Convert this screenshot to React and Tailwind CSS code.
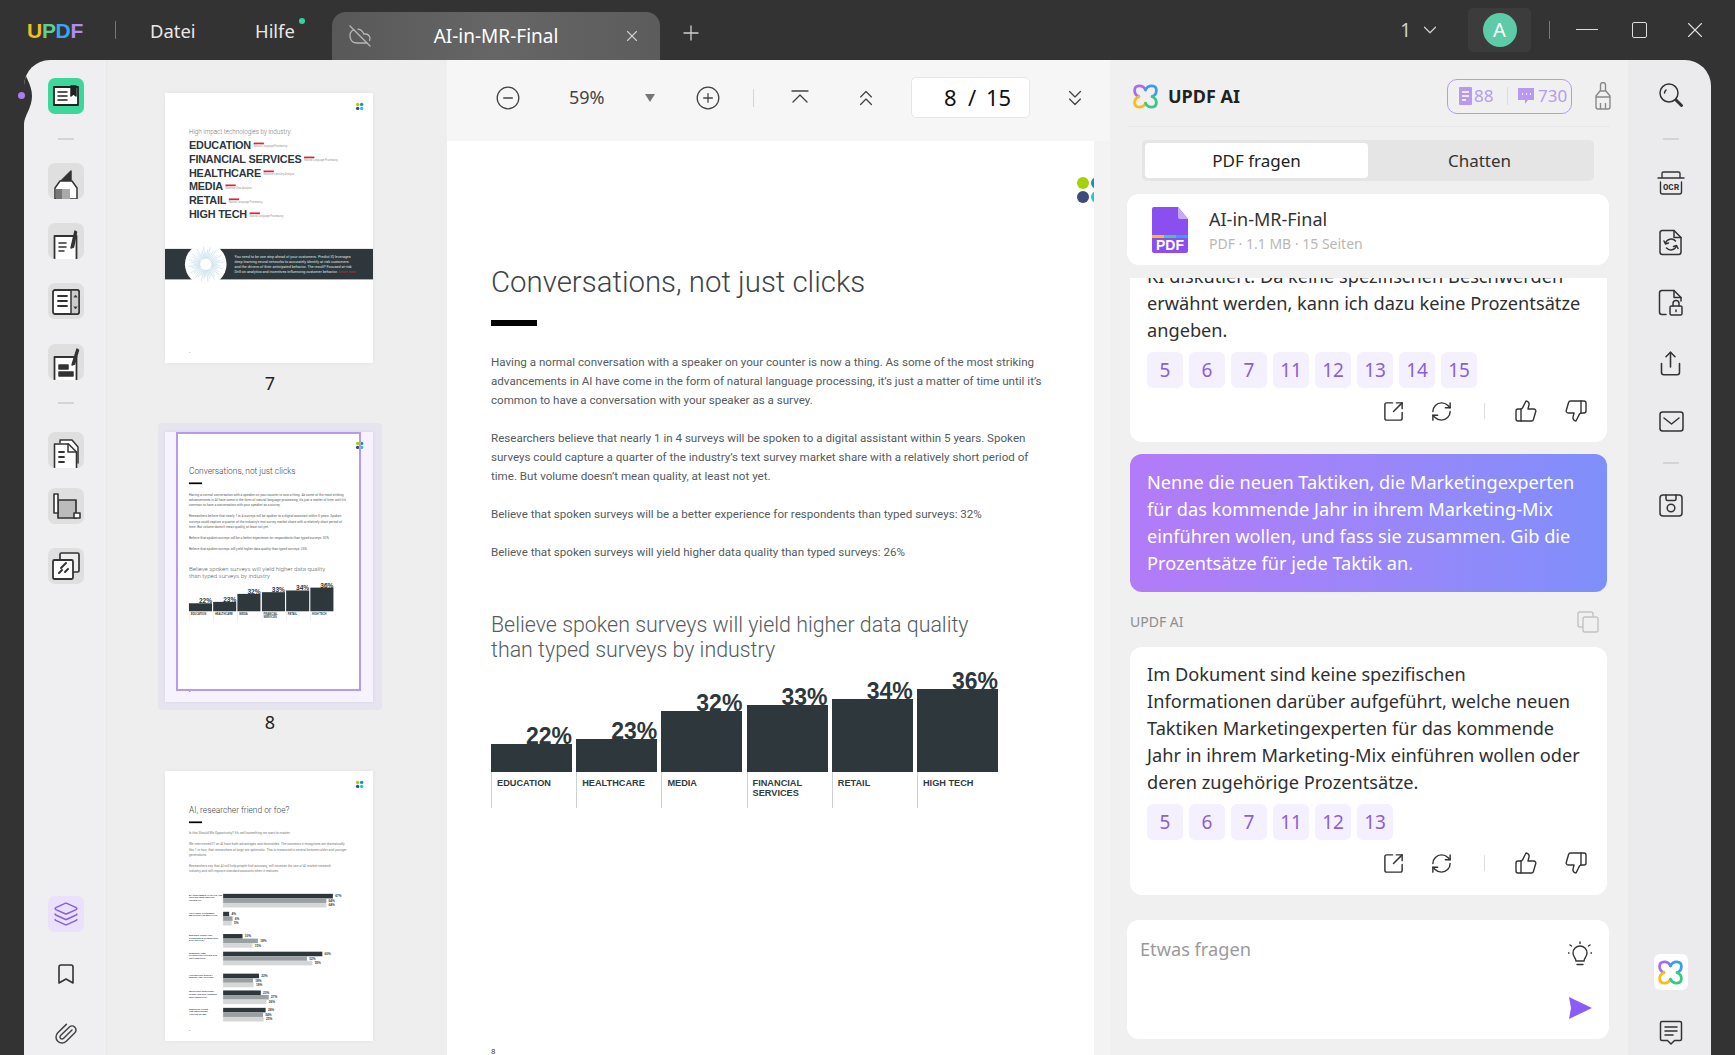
import React from "react";
import { ThumbsUp, ThumbsDown, RefreshCw, SquareArrowOutUpRight, CirclePlus, CircleMinus, ChevronsUp, ChevronsDown, ChevronDown, Layers, Bookmark, Paperclip, Plus, X, CloudOff, Share } from "lucide-react";

const ui = "font-['Noto_Sans','Liberation_Sans',sans-serif]";
const doc = "font-['Roboto','Liberation_Sans',sans-serif]";
const arial = "font-['Liberation_Sans',Arial,sans-serif]";

function Clover({ size = 26 }) {
  return (
    <svg width={size} height={size} viewBox="0 0 24 24" fill="none" strokeWidth="2.3" strokeLinecap="round">
      <path d="M12 6.5C10 2 3 2 3 7c0 3 2 4.5 3.5 5" stroke="#a66df0" />
      <path d="M12 6.5C14 2 21 2 21 7c0 3-2 4.5-3.5 5" stroke="#3b9df0" />
      <path d="M6.500 12C4.500 13 3 14.500 3 17c0 5 7 5 9 .5" stroke="#f5bd1f" />
      <path d="M17.500 12C19.500 13 21 14.500 21 17c0 5-7 5-9 .5" stroke="#35c98a" />
    </svg>
  );
}

function LogoDots() {
  return (
    <div className="grid w-[26px] grid-cols-2 gap-[2px]">
      <span className="h-3 w-3 rounded-full bg-[#a3d10a]" />
      <span className="h-3 w-3 rounded-full bg-[#1e88d2]" />
      <span className="h-3 w-3 rounded-full bg-[#3d4a7a]" />
      <span className="h-3 w-3 rounded-full bg-[#25c5d8]" />
    </div>
  );
}

function PageShell({ children, num }) {
  return (
    <div className={`${doc} flex h-[945px] w-[730px] flex-col bg-white pl-[84px] pr-[34px] pt-[34px]`}>
      <div className="flex justify-end"><LogoDots /></div>
      {children}
      <div className="mt-auto pb-[30px] text-[8px] text-[#444]">{num}</div>
    </div>
  );
}

const Lines = ({ lines, cls }) => (
  <p className={cls}>
    {lines.map((l) => <span key={l} className="block whitespace-nowrap">{l}</span>)}
  </p>
);

const bars8 = [
  ["22%", "h-[28px]", ["EDUCATION"]],
  ["23%", "h-[33px]", ["HEALTHCARE"]],
  ["32%", "h-[61px]", ["MEDIA"]],
  ["33%", "h-[67px]", ["FINANCIAL", "SERVICES"]],
  ["34%", "h-[73px]", ["RETAIL"]],
  ["36%", "h-[83px]", ["HIGH TECH"]],
];

function Page8() {
  const p = "text-[11.6px] leading-[19px] text-[#555b5e]";
  return (
    <PageShell num="8">
      <h1 className="mt-[61px] whitespace-nowrap text-[29.4px] font-light leading-[36px] text-[#3d4346]">Conversations, not just clicks</h1>
      <div className="mt-[20px] h-[6px] w-[46px] bg-black" />
      <Lines cls={`mt-[27px] ${p}`} lines={["Having a normal conversation with a speaker on your counter is now a thing. As some of the most striking", "advancements in AI have come in the form of natural language processing, it’s just a matter of time until it’s", "common to have a conversation with your speaker as a survey."]} />
      <Lines cls={`mt-[19px] ${p}`} lines={["Researchers believe that nearly 1 in 4 surveys will be spoken to a digital assistant within 5 years. Spoken", "surveys could capture a quarter of the industry’s text survey market share with a relatively short period of", "time. But volume doesn’t mean quality, at least not yet."]} />
      <Lines cls={`mt-[19px] ${p}`} lines={["Believe that spoken surveys will be a better experience for respondents than typed surveys: 32%"]} />
      <Lines cls={`mt-[19px] ${p}`} lines={["Believe that spoken surveys will yield higher data quality than typed surveys: 26%"]} />
      <Lines cls="mt-[51px] text-[21.4px] font-light leading-[24.5px] text-[#555b5e]" lines={["Believe spoken surveys will yield higher data quality", "than typed surveys by industry"]} />
      <div className="mt-[10px] flex h-[100px] w-[507px] items-end gap-[4.2px]">
        {bars8.map(([v, h]) => (
          <div key={v} className="flex w-[81px] flex-col">
            <span className={`${arial} text-right text-[23px] font-bold leading-[16px] text-[#2d373c]`}>{v}</span>
            <div className={`${h} bg-[#2d373c]`} />
          </div>
        ))}
      </div>
      <div className="flex w-[507px] gap-[4.2px]">
        {bars8.map(([v, , l]) => (
          <div key={v} className={`${arial} h-[36px] w-[81px] border-l border-[#ccd0d3] pl-[5px] pt-[7px] text-[9.2px] font-bold leading-[9.5px] text-[#333b40]`}>
            {l.map((t) => <span key={t} className="block">{t}</span>)}
          </div>
        ))}
      </div>
    </PageShell>
  );
}

const p7 = [
  ["EDUCATION", "Natural Language Processing"],
  ["FINANCIAL SERVICES", "Natural Language Processing"],
  ["HEALTHCARE", "Machine Learning Analysis"],
  ["MEDIA", "Machine Data Analysis"],
  ["RETAIL", "Natural Language Processing"],
  ["HIGH TECH", "Natural Language Processing"],
];

function Page7() {
  return (
    <PageShell num="7">
      <p className="mt-[65px] text-[22px] font-light leading-[24px] text-[#777]">High impact technologies by industry:</p>
      <div className="mt-[9px]">
        {p7.map(([t, s]) => (
          <div key={t} className="flex h-[49px] items-center gap-[9px]">
            <span className={`${arial} whitespace-nowrap text-[38px] font-bold tracking-[-0.6px] text-[#2d373c]`}>{t}</span>
            <div className="flex flex-col gap-[2px]">
              <span className="h-[6px] w-[36px] bg-[#d6263c]" />
              <span className="whitespace-nowrap text-[9px] leading-[9px] text-[#999]">{s}</span>
            </div>
          </div>
        ))}
      </div>
      <div className="-ml-[84px] -mr-[34px] mt-[95px] flex h-[107px] items-center bg-[#2d373c] pl-[70px]">
        <div className="relative h-[146px] w-[146px] shrink-0 overflow-hidden rounded-full bg-white">
          <svg viewBox="0 0 146 146" className="h-full w-full">
            {Array.from({ length: 48 }, (_, i) => {
              const a = (i / 48) * Math.PI * 2;
              const r = 44 + (i % 3) * 9;
              return <line key={i} x1={73 + 20 * Math.cos(a)} y1={73 + 20 * Math.sin(a)} x2={73 + r * Math.cos(a)} y2={73 + r * Math.sin(a)} stroke="#9cc7dc" strokeWidth="1.5" />;
            })}
          </svg>
        </div>
        <p className="ml-[28px] text-[13px] leading-[17px] text-[#dfe3e5]">
          <span className="block whitespace-nowrap">You need to be one step ahead of your customers. Predict IQ leverages</span>
          <span className="block whitespace-nowrap">deep learning neural networks to accurately identify at risk customers</span>
          <span className="block whitespace-nowrap">and the drivers of their anticipated behavior. The result? Focused at-risk</span>
          <span className="block whitespace-nowrap">Drill on analytics and incentives influencing customer behavior. <span className="text-[#d6263c]">Learn how</span></span>
        </p>
      </div>
    </PageShell>
  );
}

const p9 = [
  ["", ["BY CUSTOMERS AT SCALE AND", "GETTING NEW INSIGHTS", "FROM DATA"], [385, 362, 362], ["67%", "64%", "64%"]],
  ["mt-[15px]", ["ANALYZING CONSUMER", "EMOTIONS AND BEHAVIOR"], [21, 33, 30], ["4%", "6%", "5%"]],
  ["mt-[30px]", ["BUILDING TRUST AND", "CONFIDENCE IN RESEARCH", "DATA QUALITY"], [68, 122, 103], ["10%", "18%", "15%"]],
  ["mt-[14px]", ["SPEEDING TIME", "TO INSIGHTS ACROSS THE", "ORGANIZATION"], [348, 294, 313], ["60%", "52%", "55%"]],
  ["mt-[29px]", ["AUTOMATING SURVEY", "DESIGN AND ANALYSIS"], [126, 105, 107], ["22%", "18%", "19%"]],
  ["mt-[11px]", ["IMPROVING RESPONSE", "RATES AND ENGAGEMENT", "WITH RESEARCH"], [132, 160, 152], ["23%", "27%", "26%"]],
  ["mt-[13px]", ["REDUCING COSTS", "AND RESOURCES", "ACROSS TEAMS"], [149, 140, 142], ["26%", "24%", "25%"]],
];
const barColors = ["bg-[#2d373c]", "bg-[#9a9fa2]", "bg-[#d5d6d7]"];

function Page9() {
  const p = "text-[11.6px] leading-[19px] text-[#777]";
  return (
    <PageShell num="9">
      <h1 className="mt-[61px] whitespace-nowrap text-[29.4px] font-light leading-[36px] text-[#3d4346]">AI, researcher friend or foe?</h1>
      <div className="mt-[20px] h-[6px] w-[46px] bg-black" />
      <Lines cls={`mt-[26px] ${p}`} lines={["Is this Should We Opportunity? It’s well something we want to master."]} />
      <Lines cls={`mt-[19px] ${p}`} lines={["We interviewed IT on AI have both advantages and downsides. The concerns it recognizes are dramatically", "like 1 in four, that researchers at large are optimistic. This is measured in several between older and younger", "generations."]} />
      <Lines cls={`mt-[19px] ${p}`} lines={["Researchers say that AI will help people find accuracy, will increase the use of AI market research", "industry and will improve standard accounts when it matures."]} />
      <div className="mt-[70px] flex flex-col">
        {p9.map(([m, l, w, v]) => (
          <div key={l[0]} className={`${m} flex h-[48px]`}>
            <div className={`${arial} w-[119px] shrink-0 text-[7.5px] font-bold leading-[9px] text-[#2d373c]`}>
              {l.map((t) => <span key={t} className="block whitespace-nowrap">{t}</span>)}
            </div>
            <div className="flex flex-col border-l border-[#ddd]">
              {w.map((x, i) => (
                <div key={i} className="flex h-[16px] items-center gap-[8px]">
                  <div className={`h-[16px] ${barColors[i]}`} style={{ width: x }} />
                  <span className={`${arial} text-[11px] font-bold text-[#2d373c]`}>{v[i]}</span>
                </div>
              ))}
            </div>
          </div>
        ))}
      </div>
    </PageShell>
  );
}

function Thumb({ children, viewport }) {
  return (
    <div className="relative h-[270px] w-[208px] overflow-hidden bg-white shadow-[0_0_4px_rgba(0,0,0,0.06)]">
      <div className="h-[945px] w-[730px] origin-top-left scale-[0.285]">{children}</div>
      {viewport && <div className="absolute left-[11px] top-0 h-[259px] w-[185px] border-2 border-[#b79af0] shadow-[0_0_0_200px_rgba(150,100,240,0.08)]" />}
    </div>
  );
}

function ThumbItem({ n, selected, children, className = "" }) {
  return (
    <div className={`flex w-[224px] flex-col items-center ${className}`}>
      <div className={`rounded-[4px] pb-2 pl-[7px] pr-[9px] pt-[9px] ${selected ? "bg-[#e6e5ef]" : ""}`}>
        <Thumb viewport={selected}>{children}</Thumb>
      </div>
      <span className={`${ui} flex h-[24px] items-center text-[18px] text-[#222]`}>{n}</span>
    </div>
  );
}

const S = "#333333";
const I = ({ children, s = 36, vb = 36 }) => (
  <svg width={s} height={s} viewBox={`0 0 ${vb} ${vb}`} fill="none" stroke={S} strokeWidth="1.5" strokeLinecap="round" strokeLinejoin="round">{children}</svg>
);

const Tile = ({ children, className = "" }) => (
  <div className={`flex h-9 w-9 items-center justify-center overflow-hidden rounded-[7px] bg-[#dfdfdf] ${className}`}>{children}</div>
);
const Div = ({ className = "" }) => <div className={`h-[2px] w-[16px] bg-[#d4d4d4] ${className}`} />;

function LeftRail() {
  return (
    <div className="flex w-[83px] shrink-0 flex-col items-center border-r border-[#e9e9ea] bg-[#efeef0] pb-[3px] pl-[2px] pt-[18px]">
      <Tile className="!bg-[#3dd69b]">
        <I>
          <path d="M6 9h24v18H6z" fill="#fff" strokeWidth="1.8" stroke="#222" />
          <path d="M10 14h9M10 18h9M10 22h9" stroke="#222" />
          <path d="M23 8h5v10l-2.500-2-2.500 2z" fill="#222" stroke="#222" />
        </I>
      </Tile>
      <Div className="mt-[24px]" />
      <Tile className="mt-[23px]">
        <I>
          <path d="M13 18l10-10v10z" fill="#333" stroke="#333" />
          <path d="M12 18h12l5 7v11H7V25z" fill="#fff" />
          <path d="M8 26h6v10H8z" fill="#777" stroke="none" />
          <path d="M14 26h8v10h-8z" fill="#aaa" stroke="none" />
        </I>
      </Tile>
      <Tile className="mt-6">
        <I>
          <path d="M6.500 36V13h22v23" fill="#fff" strokeWidth="1.8" />
          <path d="M11 20h7M11 24h7M11 28h5" />
          <path d="M27 8l-4 17 2.500-1 3-15z" fill="#333" />
        </I>
      </Tile>
      <Tile className="mt-6">
        <I>
          <rect x="5" y="7" width="26" height="24" rx="2" fill="#fff" strokeWidth="1.8" />
          <path d="M23 7h6a2 2 0 012 2v20a2 2 0 01-2 2h-6z" fill="#ccc" />
          <path d="M10 13h9M10 18h9M10 23h9" strokeWidth="1.8" />
          <path d="M26 14l1.500-2 1.500 2zM26 24l1.500 2 1.500-2z" fill="#333" strokeWidth=".5" />
        </I>
      </Tile>
      <Tile className="mt-[25px]">
        <I>
          <path d="M6.500 36V13h22v23" fill="#fff" strokeWidth="1.8" />
          <path d="M11 21h9v4h-9zM11 28h14v4H11z" fill="#333" />
          <path d="M29 5l-5 16 2.500-1 4-14z" fill="#333" />
        </I>
      </Tile>
      <Div className="mt-[22px]" />
      <Tile className="mt-[28px]">
        <I>
          <path d="M12 11V8h12l6 7v16" fill="#fff" />
          <path d="M6.500 36V12h14l8 8v16" fill="#fff" strokeWidth="1.6" />
          <path d="M20 12v8h8" />
          <path d="M11 20h5M11 25h5M11 30h5" strokeWidth="1.8" />
        </I>
      </Tile>
      <Tile className="mt-5">
        <I>
          <path d="M10 12h18v18H10z" strokeWidth="1.7" fill="#bbb" />
          <rect x="6" y="6" width="4" height="19" fill="#fff" strokeWidth="1.6" />
          <rect x="26" y="25" width="6" height="5" fill="#fff" strokeWidth="1.6" />
        </I>
      </Tile>
      <Tile className="mt-6">
        <I>
          <rect x="12" y="5" width="19" height="19" rx="1.500" fill="#eee" strokeWidth="1.7" />
          <rect x="5" y="12" width="20" height="19" rx="1.500" fill="#fff" strokeWidth="1.8" />
          <path d="M11 25l3-3M13 20l5-5M17 24l3-3" strokeWidth="2" />
        </I>
      </Tile>
      <div className="mt-auto flex flex-col gap-6">
        <Tile className="!bg-[#ebe0fd]"><Layers size={26} strokeWidth={1.4} className="text-[#8b5fe0]" /></Tile>
        <div className="flex h-9 w-9 items-center justify-center"><Bookmark size={24} strokeWidth={1.6} className="text-[#333]" /></div>
        <div className="flex h-9 w-9 items-center justify-center"><Paperclip size={24} strokeWidth={1.5} className="rotate-[90deg] -scale-x-100 text-[#444]" /></div>
      </div>
    </div>
  );
}

function RightRail() {
  const b = "flex h-9 w-9 items-center justify-center";
  return (
    <div className="flex w-[83px] shrink-0 flex-col items-center bg-[#ebeaec] pb-[5px] pl-[3px] pr-[1px] pt-[17px]">
      <div className={b}>
        <I s={28} vb={28}>
          <circle cx="12" cy="12" r="9" />
          <path d="M7.500 12a5 5 0 011.500-3" />
          <path d="M19 19l5.500 5.500" strokeWidth="3" />
        </I>
      </div>
      <Div className="mt-[25px]" />
      <div className={`${b} mt-6`}>
        <svg width="30" height="30" viewBox="0 0 30 30" fill="none" stroke={S} strokeWidth="1.4" strokeLinecap="round">
          <path d="M6 10V6.500A1.500 1.500 0 017.500 5h15A1.500 1.500 0 0124 6.500V10M2 11h26M4.500 15v10a2 2 0 002 2h17a2 2 0 002-2V15" />
          <text x="15" y="22.500" textAnchor="middle" fontSize="9" fontWeight="700" fontFamily="Liberation Mono" fill={S} stroke="none">OCR</text>
        </svg>
      </div>
      <div className={`${b} mt-[24px]`}>
        <I s={30} vb={30}>
          <path d="M6 3.500h12l7 7V25a2.500 2.500 0 01-2.500 2.500h-16A2.500 2.500 0 014 25V6a2.500 2.500 0 012-2.500z" />
          <path d="M18 3.500v7h7" />
          <path d="M19.500 14a6 6 0 00-10 2M10.500 21a6 6 0 0010-2" />
          <path d="M8 14l1.500 3 3-1M22 21.500l-1.500-3-3 1" />
        </I>
      </div>
      <div className={`${b} mt-6`}>
        <I s={30} vb={30}>
          <path d="M10 27.500H6A2.500 2.500 0 013.500 25V6A2.500 2.500 0 016 3.500h12l7 7V14" />
          <path d="M18 3.500v7h7" />
          <rect x="14" y="19" width="12" height="9" rx="1.500" />
          <path d="M17 19v-2.500a3 3 0 016 0V19" />
          <path d="M20 23v1.500" />
        </I>
      </div>
      <div className={`${b} mt-[25px]`}><Share size={27} strokeWidth={1.4} className="text-[#333]" /></div>
      <div className={`${b} mt-[22px]`}>
        <I s={28} vb={28}>
          <rect x="3" y="5" width="23" height="19" rx="2.500" />
          <path d="M7 11l7.500 6L22 11" />
        </I>
      </div>
      <Div className="mt-[23px]" />
      <div className={`${b} mt-[23px]`}>
        <I s={28} vb={28}>
          <path d="M6 4h16a3 3 0 013 3v15a3 3 0 01-3 3H6a3 3 0 01-3-3V7a3 3 0 013-3z" />
          <path d="M9 4v4a1.500 1.500 0 001.500 1.500h7A1.500 1.500 0 0019 8V4" />
          <circle cx="14" cy="17" r="3.800" />
        </I>
      </div>
      <div className="mt-auto flex h-9 w-[34px] items-center justify-center rounded-[6px] bg-white"><Clover size={29} /></div>
      <div className={`${b} mt-[24px]`}>
        <I s={28} vb={28}>
          <path d="M5 3.500h18A1.500 1.500 0 0124.500 5v16a1.500 1.500 0 01-1.500 1.500h-5.500L14 26l-3.500-3.500H5A1.500 1.500 0 013.500 21V5A1.500 1.500 0 015 3.500z" />
          <path d="M8 9h12M8 13h12M8 17h8" />
        </I>
      </div>
    </div>
  );
}

function TitleBar() {
  return (
    <div className={`${ui} flex h-[60px] shrink-0 items-center bg-[#333333] text-[#e8e8e8]`}>
      <div className={`${arial} ml-[27px] w-[57px] whitespace-nowrap text-[21px] font-bold leading-none tracking-[-0.3px]`}>
        <span className="text-[#f5bd1f]">U</span><span className="text-[#5fd08c]">P</span><span className="text-[#3ba5ee]">D</span><span className="text-[#b18cf2]">F</span>
      </div>
      <div className="ml-[31px] h-[18px] w-px bg-[#777]" />
      <span className="ml-[34px] mt-[1px] w-[45px] text-[18.4px]">Datei</span>
      <div className="relative ml-[60px] mt-[1px] w-[39px] text-[18.4px]">
        Hilfe
        <span className="absolute -right-[11px] top-[1px] h-[6px] w-[6px] rounded-full bg-[#34d3a0]" />
      </div>
      <div className="ml-[38px] grid h-[48px] w-[328px] grid-cols-[1fr_auto_1fr] items-center self-end rounded-t-[14px] bg-gradient-to-r from-[#585858] via-[#666666] to-[#5c5c5c]">
        <CloudOff size={24} strokeWidth={1.3} className="ml-[16px] text-[#b8b8b8]" />
        <span className="text-[19px] text-white">AI-in-MR-Final</span>
        <div className="flex justify-end pr-[19px]"><X size={18} strokeWidth={1.5} className="text-[#cfcfcf]" /></div>
      </div>
      <Plus size={24} strokeWidth={1.3} className="ml-[19px] mt-[6px] text-[#cfcfcf]" />
      <div className="ml-auto flex items-center">
        <span className="text-[19px] text-[#d0d0d0]">1</span>
        <ChevronDown size={22} strokeWidth={1.3} className="ml-[8px] text-[#d0d0d0]" />
        <div className="ml-[27px] flex h-[44px] w-[63px] items-center justify-center rounded-[5px] bg-[#3c3c3c]">
          <span className="flex h-[34px] w-[34px] items-center justify-center rounded-full bg-[#5ecba8] text-[20px] text-white">A</span>
        </div>
        <div className="ml-[18px] h-[18px] w-px bg-[#777]" />
        <div className="mb-[2px] ml-[26px] h-px w-[22px] bg-[#ddd]" />
        <div className="ml-[34px] h-[16px] w-[15px] rounded-[2px] border border-[#ddd]" />
        <X size={26} strokeWidth={1} className="ml-[35px] mr-[27px] text-[#ddd]" />
      </div>
    </div>
  );
}

function Toolbar() {
  const c = "text-[#444]";
  return (
    <div className={`${ui} flex h-[81px] shrink-0 items-center bg-[#f6f6f7] pb-[6px]`}>
      <CircleMinus size={26} strokeWidth={1.2} className={`ml-[48px] ${c}`} />
      <span className="ml-[48px] w-[37px] text-[18px] text-[#444]">59%</span>
      <span className="ml-[39px] h-0 w-0 border-x-[5px] border-t-[8px] border-x-transparent border-t-[#777]" />
      <CirclePlus size={26} strokeWidth={1.2} className={`ml-[40px] ${c}`} />
      <div className="ml-[32px] h-[18px] w-px bg-[#d5d5d5]" />
      <svg width="24" height="24" viewBox="0 0 24 24" fill="none" stroke="#444" strokeWidth="1.4" strokeLinecap="round" strokeLinejoin="round" className="ml-[34px]">
        <path d="M4 5h16M5 16l7-7 7 7" />
      </svg>
      <ChevronsUp size={26} strokeWidth={1.2} className={`ml-[41px] ${c}`} />
      <div className="ml-[32px] flex h-[41px] w-[119px] items-center rounded-[5px] border border-[#e6e6e6] bg-white pl-[32px] text-[22px] text-[#111]">
        <span className="w-[18px]">8</span><span className="w-[20px] text-center">/</span><span className="ml-[4px]">15</span>
      </div>
      <ChevronsDown size={26} strokeWidth={1.2} className={`ml-[32px] ${c}`} />
    </div>
  );
}

const Chips = ({ items }) => (
  <div className="mt-[8px] flex gap-[6px]">
    {items.map((n) => (
      <span key={n} className="flex h-9 w-9 items-center justify-center rounded-[6px] bg-[#f5f0fe] text-[19px] text-[#8b5fd6]">{n}</span>
    ))}
  </div>
);

const Actions = () => (
  <div className="mt-[11px] flex h-6 items-center justify-end pr-[19px] text-[#333]">
    <SquareArrowOutUpRight size={23} strokeWidth={1.5} />
    <RefreshCw size={23} strokeWidth={1.5} className="ml-[25px]" />
    <div className="ml-[31px] h-[16px] w-px bg-[#ddd]" />
    <ThumbsUp size={24} strokeWidth={1.4} className="ml-[29px]" />
    <ThumbsDown size={24} strokeWidth={1.4} className="ml-[26px]" />
  </div>
);

const TextBlock = ({ lines, cls = "" }) => (
  <p className={`text-[18.2px] leading-[27px] ${cls}`}>
    {lines.map((l) => <span key={l} className="block whitespace-nowrap">{l}</span>)}
  </p>
);

function AIPanel() {
  return (
    <div className={`${ui} flex w-[518px] shrink-0 flex-col bg-[#f0f0f1] text-[#2f2f2f]`}>
      <div className="mx-[18px] flex h-[67px] shrink-0 items-center border-b border-[#e8e8e9] pt-[6px]">
        <div className="ml-[3px]"><Clover size={29} /></div>
        <span className="ml-[8px] text-[18px] font-bold text-[#222]">UPDF AI</span>
        <div className="ml-auto flex h-[35px] w-[125px] items-center rounded-[10px] border border-[#b79af0] pl-[11px] text-[17px] text-[#b79af0]">
          <svg width="13" height="18" viewBox="0 0 13 18"><path d="M1 0h11a1 1 0 011 1v16a1 1 0 01-1 1H1a1 1 0 01-1-1V1a1 1 0 011-1z" fill="#b79af0" /><path d="M3 5h7M3 9h7M3 13h4" stroke="#fff" strokeWidth="1.3" /></svg>
          <span className="ml-[2px] w-[26px]">88</span>
          <div className="ml-[7px] h-[18px] w-px bg-[#ddd]" />
          <svg width="18" height="18" viewBox="0 0 18 18" className="ml-[9px]"><path d="M1 1h16v12h-6l-3 4v-4H1z" fill="#b79af0" /><path d="M5 7h1M9 7h1M13 7h1" stroke="#fff" strokeWidth="1.600" /></svg>
          <span className="ml-[3px]">730</span>
        </div>
        <svg width="20" height="28" viewBox="0 0 20 28" fill="none" stroke="#888" strokeWidth="1.4" strokeLinejoin="round" className="-mr-[3px] ml-[21px]">
          <path d="M7.500 9V3a2.500 2.500 0 015 0v6" />
          <path d="M7 9h6l4 5v11a2 2 0 01-2 2H5a2 2 0 01-2-2V14z" />
          <path d="M3 15h14M7.500 21v6M12.500 21v6" />
        </svg>
      </div>
      <div className="ml-[32px] mt-[13px] flex h-[41px] w-[452px] shrink-0 rounded-[5px] bg-[#e5e5e6] p-[3px] text-[17px]">
        <div className="flex w-[223px] items-center justify-center rounded-[4px] bg-white text-[#222]">PDF fragen</div>
        <div className="flex flex-1 items-center justify-center text-[#333]">Chatten</div>
      </div>
      <div className="ml-[17px] mt-[13px] flex h-[71px] w-[482px] shrink-0 items-center rounded-[12px] bg-white pl-[25px]">
        <svg width="36" height="46" viewBox="0 0 36 46">
          <path d="M2 0h24l10 12v32a2 2 0 01-2 2H2a2 2 0 01-2-2V2a2 2 0 012-2z" fill="#8b4ff0" />
          <path d="M26 0l10 12H28a2 2 0 01-2-2z" fill="#c9a8f8" />
          <path d="M0 28h12v3H0z" fill="#f5bd1f" /><path d="M12 28h12v3H12z" fill="#45c7a0" /><path d="M24 28h12v3H24z" fill="#3b9df0" />
          <text x="18" y="43" textAnchor="middle" fontSize="14" fontWeight="700" fontFamily="Liberation Sans" fill="#fff">PDF</text>
        </svg>
        <div className="ml-[21px] flex flex-col">
          <span className="text-[18px] leading-[26px] text-[#333]">AI-in-MR-Final</span>
          <span className="mt-[2px] text-[14px] leading-[20px] text-[#b8b8b8]">PDF · 1.1 MB · 15 Seiten</span>
        </div>
      </div>
      <div className="ml-[20px] mt-[13px] h-[627px] w-[477px] shrink-0 overflow-hidden">
        <div className="-mt-[30px] rounded-[12px] bg-white pb-[19px] pl-[17px] pt-[15px]">
          <TextBlock lines={["KI diskutiert. Da keine spezifischen Beschwerden", "erwähnt werden, kann ich dazu keine Prozentsätze", "angeben."]} />
          <Chips items={[5, 6, 7, 11, 12, 13, 14, 15]} />
          <Actions />
        </div>
        <div className="mt-[12px] rounded-[12px] bg-gradient-to-r from-[#b37bf8] to-[#7f8ffb] py-[15px] pl-[17px] text-white">
          <TextBlock lines={["Nenne die neuen Taktiken, die Marketingexperten", "für das kommende Jahr in ihrem Marketing-Mix", "einführen wollen, und fass sie zusammen. Gib die", "Prozentsätze für jede Taktik an."]} />
        </div>
        <div className="flex h-[55px] items-center justify-between pr-[7px] pt-[4px] text-[14px] text-[#8e8e8e]">
          <span>UPDF AI</span>
          <svg width="24" height="24" viewBox="0 0 24 24" fill="none" stroke="#c2c2c2" strokeWidth="1.4"><rect x="7" y="7" width="15" height="15" rx="2" /><path d="M17 7V4a2 2 0 00-2-2H4a2 2 0 00-2 2v11a2 2 0 002 2h3" /></svg>
        </div>
        <div className="rounded-[12px] bg-white pb-[20px] pl-[17px] pt-[14px]">
          <TextBlock lines={["Im Dokument sind keine spezifischen", "Informationen darüber aufgeführt, welche neuen", "Taktiken Marketingexperten für das kommende", "Jahr in ihrem Marketing-Mix einführen wollen oder", "deren zugehörige Prozentsätze."]} />
          <Chips items={[5, 6, 7, 11, 12, 13]} />
          <Actions />
        </div>
      </div>
      <div className="ml-[17px] mt-[15px] flex h-[119px] w-[482px] shrink-0 flex-col rounded-[12px] bg-white pl-[13px] pr-[17px] pt-[15px]">
        <div className="flex items-start justify-between">
          <span className="text-[18.2px] leading-[28px] text-[#9a9a9a]">Etwas fragen</span>
          <svg width="24" height="28" viewBox="0 0 24 28" fill="none" stroke="#333" strokeWidth="1.4" strokeLinecap="round" className="mt-[6px]">
            <path d="M8 20c0-3-3-4-3-8a7 7 0 0114 0c0 4-3 5-3 8z" />
            <path d="M9 23.500h6M12 1v1.500M2 4l1.500 1M22 4l-1.500 1M0 12h1M23 12h1" />
          </svg>
        </div>
        <svg width="24" height="22" viewBox="0 0 24 22" className="ml-auto mt-[28px]"><path d="M1 0l23 11L1 22l2-11z" fill="#8b5cf6" /></svg>
      </div>
    </div>
  );
}

export default function App() {
  return (
    <div className="relative flex h-[1055px] w-[1735px] flex-col overflow-hidden bg-[#333333]">
      <TitleBar />
      <div className="relative ml-6 mr-6 flex min-h-0 flex-1 overflow-hidden rounded-t-[26px]">
        <LeftRail />
        <div className="flex w-[340px] shrink-0 flex-col items-start bg-[#eeeeee] pl-[51px] pt-6">
          <ThumbItem n="7"><Page7 /></ThumbItem>
          <ThumbItem n="8" selected className="mt-7"><Page8 /></ThumbItem>
          <ThumbItem n="9" className="mt-7"><Page9 /></ThumbItem>
        </div>
        <div className="flex w-[663px] shrink-0 flex-col bg-[#f3f3f4]">
          <Toolbar />
          <div className="flex min-h-0 flex-1">
            <div className="w-[647px] overflow-hidden bg-white pt-[2px]">
              <div className="-ml-[40px]"><Page8 /></div>
            </div>
          </div>
        </div>
        <AIPanel />
        <RightRail />
        <svg width="10" height="56" viewBox="0 0 10 56" className="absolute left-0 top-[8px]">
          <path d="M0 0c0 8 8 16 8 28S0 48 0 56z" fill="#333333" />
        </svg>
      </div>
      <span className="absolute left-[18px] top-[92px] h-[7px] w-[7px] rounded-full bg-[#a97ff0]" />
    </div>
  );
}
